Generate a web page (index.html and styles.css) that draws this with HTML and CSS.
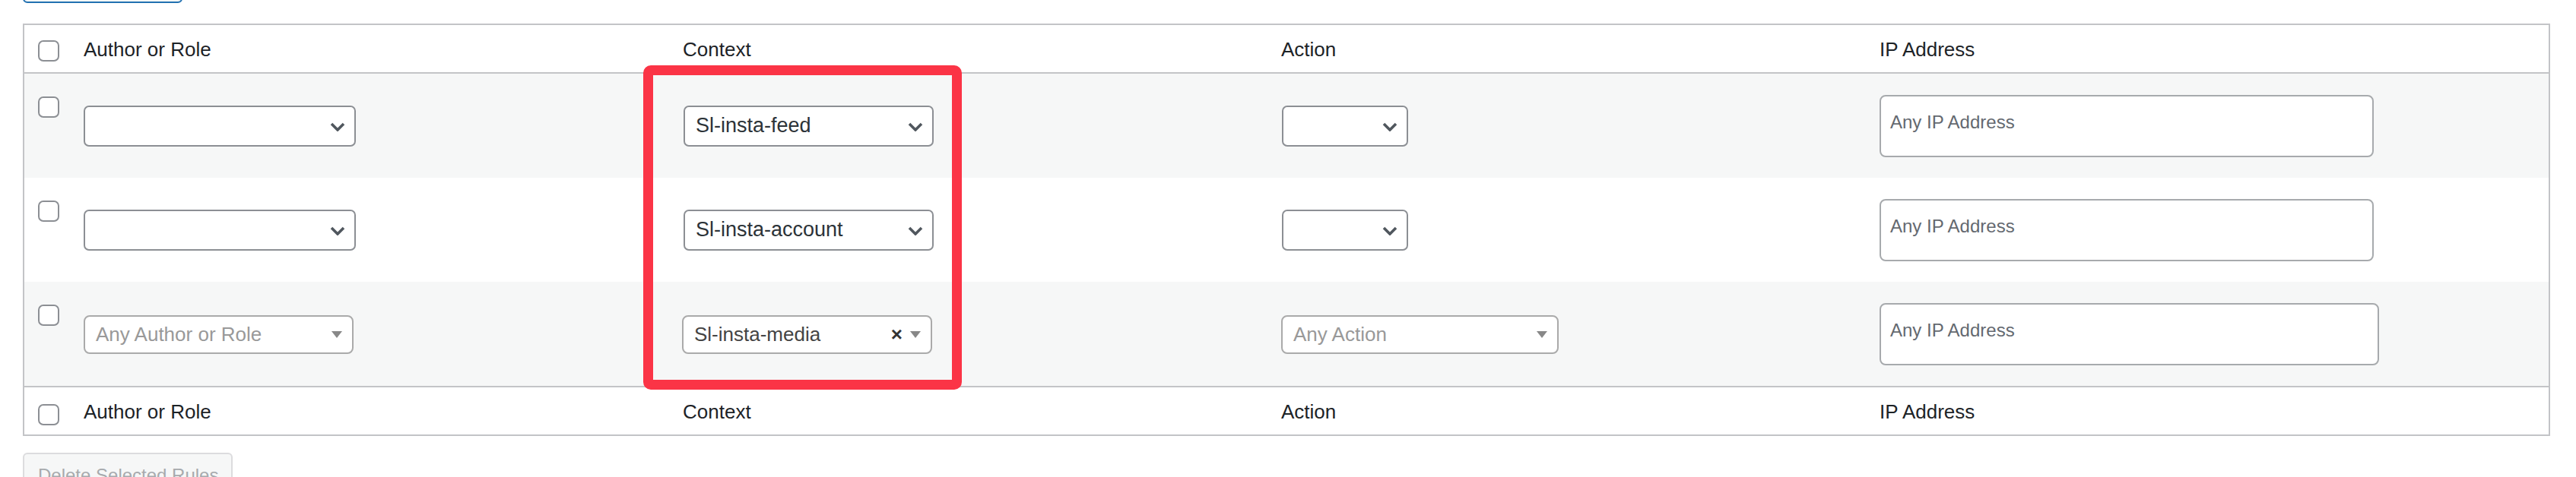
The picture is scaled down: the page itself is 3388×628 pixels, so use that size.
FILE: index.html
```html
<!DOCTYPE html>
<html lang="en">
<head>
<meta charset="utf-8">
<title>Exclude Rules</title>
<link rel="stylesheet" href="styles.css">
</head>
<body>
<div class="page">
  <div class="top-button"></div>

  <div class="rules">
    <div class="row head">
      <div class="cell check"><span class="cb"></span></div>
      <div class="cell label">Author or Role</div>
      <div class="cell label">Context</div>
      <div class="cell label">Action</div>
      <div class="cell label">IP Address</div>
    </div>

    <div class="row body alt">
      <div class="cell check"><span class="cb"></span></div>
      <div class="cell"><div class="wp-select w-author"><span class="val"></span><svg class="chev" viewBox="0 0 20 12" width="20" height="12"><polyline points="2,2 10,10 18,2" /></svg></div></div>
      <div class="cell"><div class="wp-select w-context"><span class="val">Sl-insta-feed</span><svg class="chev" viewBox="0 0 20 12" width="20" height="12"><polyline points="2,2 10,10 18,2" /></svg></div></div>
      <div class="cell"><div class="wp-select w-action"><span class="val"></span><svg class="chev" viewBox="0 0 20 12" width="20" height="12"><polyline points="2,2 10,10 18,2" /></svg></div></div>
      <div class="cell"><div class="ip">Any IP Address</div></div>
    </div>

    <div class="row body">
      <div class="cell check"><span class="cb"></span></div>
      <div class="cell"><div class="wp-select w-author"><span class="val"></span><svg class="chev" viewBox="0 0 20 12" width="20" height="12"><polyline points="2,2 10,10 18,2" /></svg></div></div>
      <div class="cell"><div class="wp-select w-context"><span class="val">Sl-insta-account</span><svg class="chev" viewBox="0 0 20 12" width="20" height="12"><polyline points="2,2 10,10 18,2" /></svg></div></div>
      <div class="cell"><div class="wp-select w-action"><span class="val"></span><svg class="chev" viewBox="0 0 20 12" width="20" height="12"><polyline points="2,2 10,10 18,2" /></svg></div></div>
      <div class="cell"><div class="ip">Any IP Address</div></div>
    </div>

    <div class="row body alt">
      <div class="cell check"><span class="cb"></span></div>
      <div class="cell"><div class="s2 w-s2-author"><span class="placeholder">Any Author or Role</span><span class="s2-arrow"></span></div></div>
      <div class="cell"><div class="s2 w-s2-context"><span class="chosen">Sl-insta-media</span><span class="s2-icons"><span class="clear">×</span><span class="s2-arrow"></span></span></div></div>
      <div class="cell"><div class="s2 w-s2-action"><span class="placeholder">Any Action</span><span class="s2-arrow"></span></div></div>
      <div class="cell"><div class="ip wide">Any IP Address</div></div>
    </div>

    <div class="row foot">
      <div class="cell check"><span class="cb"></span></div>
      <div class="cell label">Author or Role</div>
      <div class="cell label">Context</div>
      <div class="cell label">Action</div>
      <div class="cell label">IP Address</div>
    </div>
  </div>

  <button class="delete" disabled>Delete Selected Rules</button>

  <div class="highlight"></div>
</div>
</body>
</html>
```

FILE: styles.css
```css
* { box-sizing: border-box; }

html, body {
  margin: 0;
  padding: 0;
  background: #ffffff;
}

body {
  font-family: "Liberation Sans", Arial, sans-serif;
  font-size: 26px;
  color: #2c3338;
  overflow: hidden;
}

.page {
  position: relative;
  display: flow-root;
  padding: 0 34px 0 30px;
}

.top-button {
  width: 210px;
  height: 40px;
  margin-top: -36px;
  border: 2px solid #2271b1;
  border-radius: 6px;
  background: #f6f7f7;
}

.rules {
  margin-top: 27px;
  border: 2px solid #c3c4c7;
  background: #ffffff;
}

.row {
  display: grid;
  grid-template-columns: 58px 788px 787px 787px 1fr;
}

.row.head,
.row.foot {
  height: 64px;
  align-items: start;
}

.row.head {
  border-bottom: 2px solid #c3c4c7;
}

.row.foot {
  border-top: 2px solid #c3c4c7;
}

.row.body {
  height: 137px;
  align-items: center;
}

.row.alt {
  background: #f6f7f7;
}

.cell {
  padding-left: 20px;
  display: flex;
  align-items: center;
}

.cell.label {
  height: 62px;
  color: #1d2327;
  line-height: 1;
  padding-top: 2px;
}

.cell.check {
  padding-left: 18px;
  align-self: start;
  padding-top: 20px;
}

.row.body .cell.check {
  padding-top: 30px;
}

.row.foot .cell.check {
  padding-top: 22px;
}

.cb {
  display: block;
  width: 28px;
  height: 28px;
  border: 2px solid #8c8f94;
  border-radius: 7px;
  background: #ffffff;
}

/* WordPress-style select */
.wp-select {
  height: 54px;
  border: 2px solid #8c8f94;
  border-radius: 7px;
  background: #ffffff;
  display: flex;
  align-items: center;
  justify-content: space-between;
  padding: 0 12px 0 14px;
  color: #2c3338;
  font-size: 27px;
}

.wp-select .val {
  white-space: nowrap;
}

.chev {
  display: block;
  width: 20px;
  height: 12px;
  margin-top: 3px;
}

.chev polyline {
  fill: none;
  stroke: #50575e;
  stroke-width: 3.6;
  stroke-linecap: butt;
  stroke-linejoin: miter;
}

.w-author { width: 358px; }
.w-context { width: 329px; margin-left: 1px; }
.w-action { width: 166px; margin-left: 1px; }

/* select2-style control */
.s2 {
  height: 51px;
  border: 2px solid #aaaaaa;
  border-radius: 8px;
  background: #ffffff;
  display: flex;
  align-items: center;
  justify-content: space-between;
  padding: 0 11px 0 14px;
  font-size: 26px;
  margin-top: 1px;
}

.w-s2-author { width: 355px; }
.w-s2-context { width: 329px; margin-left: -1px; }
.w-s2-action { width: 365px; }

.placeholder { color: #999999; white-space: nowrap; }
.chosen { color: #444444; white-space: nowrap; }

.s2-icons {
  display: flex;
  align-items: center;
}

.clear {
  font-weight: bold;
  color: #333333;
  font-size: 26px;
  line-height: 1;
  margin-right: 10px;
}

.s2-arrow {
  display: block;
  width: 0;
  height: 0;
  border-style: solid;
  border-width: 9px 7px 0 7px;
  border-color: #888888 transparent transparent transparent;
  margin-right: 2px;
}

/* IP address field */
.ip {
  width: 650px;
  height: 82px;
  border: 2px solid #a7aaad;
  border-radius: 8px;
  background: #ffffff;
  padding: 20px 12px 0 12px;
  font-size: 24px;
  line-height: 28px;
  color: #646970;
  align-self: center;
}

.ip.wide { width: 657px; }

.delete {
  display: block;
  margin-top: 22px;
  width: 276px;
  height: 60px;
  padding: 0 0 0 18px;
  text-align: left;
  border: 2px solid #dcdcde;
  border-radius: 6px;
  background: #f6f7f7;
  color: #a7aaad;
  font-family: "Liberation Sans", Arial, sans-serif;
  font-size: 24px;
  line-height: 56px;
}

.highlight {
  position: absolute;
  left: 846px;
  top: 86px;
  width: 419px;
  height: 427px;
  border: 13px solid #fb3446;
  border-radius: 10px;
}
```
